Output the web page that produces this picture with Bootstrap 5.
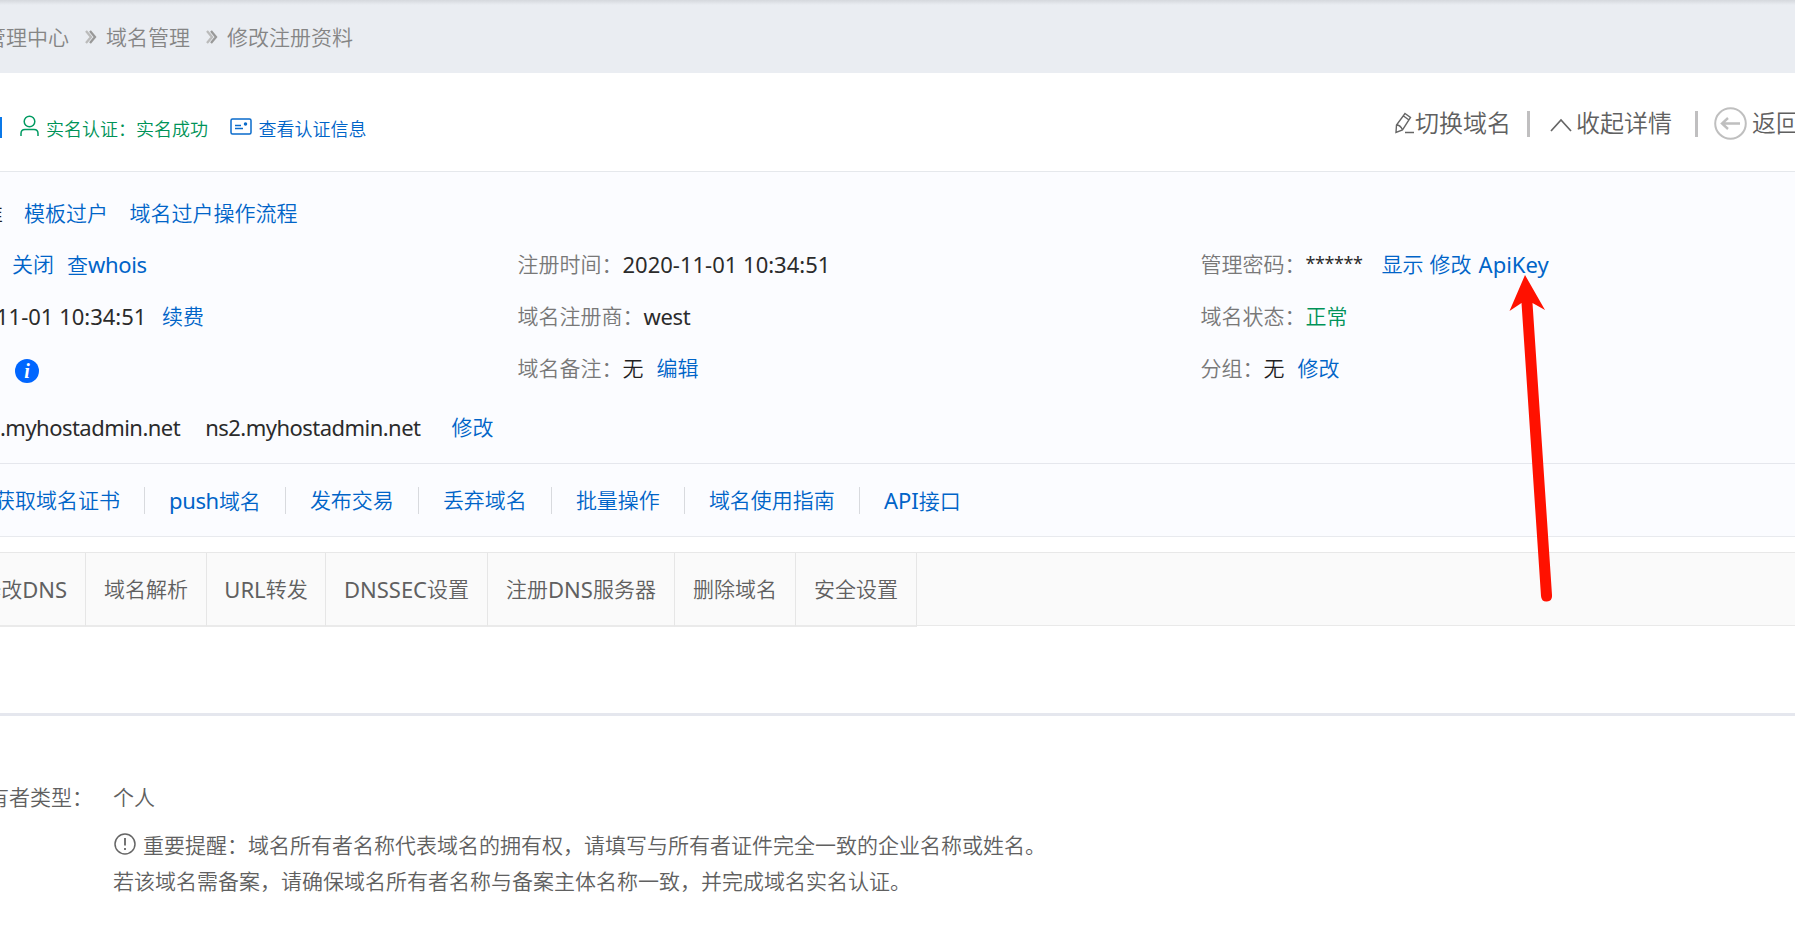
<!DOCTYPE html>
<html lang="zh-CN">
<head>
<meta charset="utf-8">
<title>修改注册资料</title>
<link href="https://cdn.jsdelivr.net/npm/bootstrap@5.3.0/dist/css/bootstrap.min.css" rel="stylesheet">
<style>
body{font-family:"Noto Sans","Noto Sans CJK SC",sans-serif;font-size:21px;line-height:30px;color:#606060;font-weight:350;white-space:nowrap;overflow:hidden;height:930px}
a{color:#0064c8;text-decoration:none}
svg{flex:none;display:block}
b{font-weight:400;font-size:22px}
.crumbs{height:73px;background:linear-gradient(#d5d8dd,#eaedf2 5px);color:#858585;padding-top:1px}
.crumbs span:first-child{margin-left:-15px}
.crumbs svg{margin:0 9px 0 16px}
.titlebar{height:99px;border-bottom:1px solid #e5e8ec;padding-top:14px}
.verify{font-size:18px;color:#009358;margin-top:-1px}
.domain-tail{width:2px;height:21px;background:#0a78e8;margin-top:-3px}
.tools{font-size:24px;margin:-13px -6px 0 0}
.rule{width:3px;height:26px;background:#c0bfc0}
.panel{background:#fbfcff;border-bottom:1px solid #e8eaee}
.owner-line{height:82px}
.facts{display:grid;grid-template-columns:517.5px 683px 1fr;grid-template-rows:52px 52px 51px;color:#787878;margin-top:-16px}
.facts>div,.owner-line,.dns-line{display:flex;align-items:center}
.val{color:#1f1f1f}
b.val{color:#2b2b2b}
.ok{color:#009358}
.stars{font-size:18px;letter-spacing:-.4px;margin-top:-2px}
.hostname{letter-spacing:-.53px}
.tight{letter-spacing:-.35px}
.dns-line{height:71px;border-bottom:1px solid #e5e7ed;padding-bottom:3px}
.links{height:72px}
.links a{padding:0 24px;border-right:1px solid #d8dade;height:27px;line-height:27px}
.links a:first-child{margin-left:-30px}
.links a:last-child{border:0}
.tabs{height:75px;margin-top:15px;background:#fafafa;border-top:1px solid #e8e8e8;box-shadow:inset 0 -1px #fff,inset 0 -2px #e9e9e9}
.tabs a{color:#606060;border-right:1px solid #e6e6e6;border-bottom:2px solid #eaeaea;height:74px;line-height:72px;display:flex;justify-content:center}
.owner{border-top:3px solid #e5e7ee;margin-top:86px;padding-top:66px}
.owner p{margin:0}
.pointer{left:1507.500px;top:274px}
</style>
</head>
<body>
<nav class="crumbs d-flex align-items-center">
<span>管理中心</span>
<svg width="12" height="14" viewBox="0 0 12 14" fill="none" stroke-width="2.300"><path stroke="#bbb" d="M1 1l5 6-5 6"/><path stroke="#999" d="M5 1l5 6-5 6"/></svg>
<span>域名管理</span>
<svg width="12" height="14" viewBox="0 0 12 14" fill="none" stroke-width="2.300"><path stroke="#bbb" d="M1 1l5 6-5 6"/><path stroke="#999" d="M5 1l5 6-5 6"/></svg>
<span>修改注册资料</span>
</nav>
<header class="titlebar d-flex align-items-center">
<div class="domain-tail"></div>
<div class="verify d-flex align-items-center">
<svg width="19" height="22" viewBox="0 0 19 22" fill="none" stroke="#009a61" stroke-width="1.500" style="margin:-5px 7px 0 18px"><circle cx="9.500" cy="6.500" r="5.300"/><path d="M1 21v-2.500q0-4 4-4h9q4 0 4 4V21"/></svg>
<span>实名认证：实名成功</span>
<svg width="22" height="17" viewBox="0 0 22 17" fill="none" stroke="#0a6bcb" stroke-width="1.500" style="margin:-4px 7px 0 21.500px"><rect x="1" y="1" width="20" height="15" rx="1.500"/><path d="M5 7.500h6M5 10.500h8"/><circle cx="15.500" cy="6" r="1" fill="#0a6bcb"/></svg>
<a href="#">查看认证信息</a>
</div>
<div class="tools d-flex align-items-center ms-auto">
<svg width="20" height="22" viewBox="0 0 20 22" fill="none" stroke="#666" stroke-width="1.400"><path d="M10 1.500l5.500 4L7.500 18 1 20.500 1.500 13zM8.500 4l5.500 4M1.500 13q4 0 6 5M10 20.500h9"/></svg>
<span>切换域名</span><i class="rule" style="margin:2px 20px 0 16px"></i>
<svg width="22" height="14" viewBox="0 0 22 14" fill="none" stroke="#666" stroke-width="1.700" style="margin:4px 4px 0 0"><path d="M1 13L11 2l10 11"/></svg>
<span>收起详情</span><i class="rule" style="margin:2px 16px 0 23px"></i>
<svg width="33" height="33" viewBox="0 0 33 33" fill="none" stroke="#bfbfbf" stroke-width="2" style="margin:2px 5px 0 0"><circle cx="16.500" cy="16.500" r="15.300"/><path d="M26 16.500H8M14 11l-6 5.500 6 5.500" stroke-width="2.400"/></svg>
<span style="margin-right:1px">返回</span>
</div>
</header>
<section class="panel">
<div class="owner-line"><span class="val" style="margin-left:-18px">准</span><a href="#" style="margin-left:21px">模板过户</a><a href="#" style="margin-left:21.500px">域名过户操作流程</a></div>
<div class="facts">
<div><a href="#" style="margin-left:12px">关闭</a><a href="#" style="margin-left:13px">查<b class="tight">whois</b></a></div>
<div>注册时间：<b class="val">2020-11-01 10:34:51</b></div>
<div>管理密码：<b class="val stars">******</b><a href="#" style="margin-left:19px">显示</a><a href="#" style="margin-left:6px">修改</a><a href="#" style="margin-left:7px"><b>ApiKey</b></a></div>
<div><b class="val" style="margin-left:-4px">11-01 10:34:51</b><a href="#" style="margin-left:15.500px">续费</a></div>
<div>域名注册商：<b class="val tight">west</b></div>
<div>域名状态：<span class="ok">正常</span></div>
<div><svg width="24" height="24" viewBox="0 0 24 24" style="margin:6px 0 0 15px"><circle cx="12" cy="12" r="12" fill="#06f"/><text x="12" y="18.500" text-anchor="middle" fill="#fff" font-family="Liberation Serif" font-style="italic" font-weight="700" font-size="20">i</text></svg></div>
<div>域名备注：<span class="val">无</span><a href="#" style="margin-left:13px">编辑</a></div>
<div>分组：<span class="val">无</span><a href="#" style="margin-left:13px">修改</a></div>
</div>
<div class="dns-line"><b class="val hostname">.myhostadmin.net</b><b class="val hostname" style="margin-left:25px">ns2.myhostadmin.net</b><a href="#" style="margin-left:31px">修改</a></div>
<div class="links d-flex align-items-center">
<a href="#">获取域名证书</a><a href="#"><b class="tight">push</b>域名</a><a href="#">发布交易</a><a href="#">丢弃域名</a><a href="#">批量操作</a><a href="#">域名使用指南</a><a href="#"><b>API</b>接口</a>
</div>
</section>
<nav class="tabs d-flex">
<a href="#" style="width:86px;justify-content:flex-end;padding-right:18px">修改<b>DNS</b></a><a href="#" style="width:121px">域名解析</a><a href="#" style="width:119px"><b>URL</b>转发</a><a href="#" style="width:162px"><b>DNSSEC</b>设置</a><a href="#" style="width:187px">注册<b>DNS</b>服务器</a><a href="#" style="width:121px">删除域名</a><a href="#" style="width:121px">安全设置</a>
</nav>
<section class="owner">
<div class="d-flex"><span style="margin-left:-12px;width:125px">有者类型：</span><span>个人</span></div>
<div style="margin:15px 0 0 113px">
<p class="d-flex align-items-center" style="height:36px"><svg width="22" height="22" viewBox="0 0 22 22" fill="none" stroke="#666" stroke-width="1.500" style="margin:-2px 7px 0 1px"><circle cx="11" cy="11" r="10"/><path d="M11 5v7.500M11 15v2" stroke-width="1.800"/></svg>重要提醒：域名所有者名称代表域名的拥有权，请填写与所有者证件完全一致的企业名称或姓名。</p>
<p style="line-height:36px">若该域名需备案，请确保域名所有者名称与备案主体名称一致，并完成域名实名认证。</p>
</div>
</section>
<svg class="pointer position-absolute" width="48" height="330" viewBox="0 0 48 330" fill="#f10"><path d="M17 1L37 36 24.500 29 44 321q.500 6-5 6.500t-6-5.500L13.500 29 1.500 37z"/></svg>
<script src="https://cdn.jsdelivr.net/npm/bootstrap@5.3.0/dist/js/bootstrap.bundle.min.js"></script>
</body>
</html>
